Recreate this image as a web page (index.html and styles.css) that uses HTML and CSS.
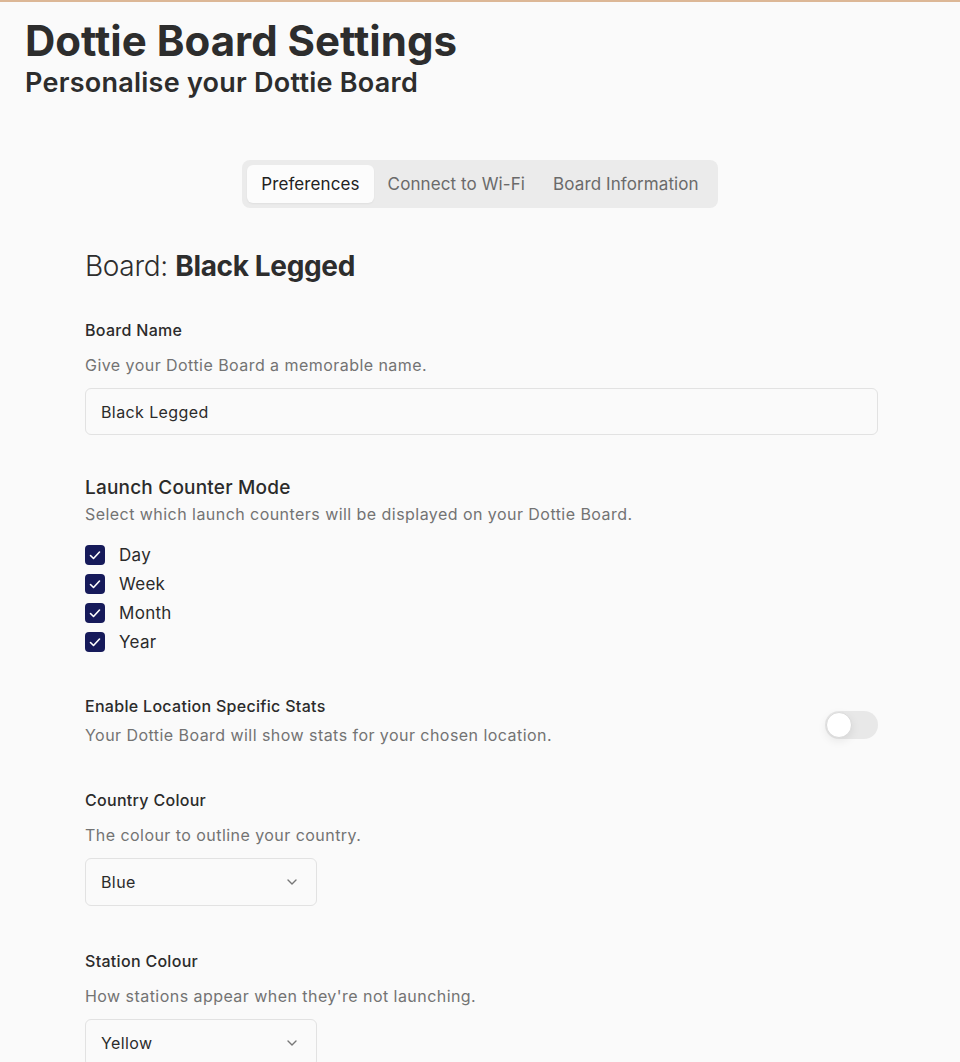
FILE: index.html
```html
<!DOCTYPE html>
<html>
<head>
<meta charset="utf-8">
<link rel="stylesheet" href="styles.css">
</head>
<body>
<div class="topline"></div>
<header class="header">
  <h1 class="title">Dottie Board Settings</h1>
  <h2 class="subtitle">Personalise your Dottie Board</h2>
</header>
<nav class="tabs-wrap">
  <div class="tabs">
    <div class="tab active">Preferences</div>
    <div class="tab">Connect to Wi-Fi</div>
    <div class="tab">Board Information</div>
  </div>
</nav>
<main class="content">
  <h3 class="board">Board: <b>Black Legged</b></h3>

  <section class="field">
    <div class="label">Board Name</div>
    <div class="desc spaced">Give your Dottie Board a memorable name.</div>
    <div class="input">Black Legged</div>
  </section>

  <section class="field counters">
    <div class="label big">Launch Counter Mode</div>
    <div class="desc">Select which launch counters will be displayed on your Dottie Board.</div>
    <div class="checks">
      <div class="check"><span class="box"><svg viewBox="0 0 20 20" width="20" height="20"><path d="M5.5 10.5l3 3 6-6.5" fill="none" stroke="#fff" stroke-width="1.6" stroke-linecap="round" stroke-linejoin="round"/></svg></span>Day</div>
      <div class="check"><span class="box"><svg viewBox="0 0 20 20" width="20" height="20"><path d="M5.5 10.5l3 3 6-6.5" fill="none" stroke="#fff" stroke-width="1.6" stroke-linecap="round" stroke-linejoin="round"/></svg></span>Week</div>
      <div class="check"><span class="box"><svg viewBox="0 0 20 20" width="20" height="20"><path d="M5.5 10.5l3 3 6-6.5" fill="none" stroke="#fff" stroke-width="1.6" stroke-linecap="round" stroke-linejoin="round"/></svg></span>Month</div>
      <div class="check"><span class="box"><svg viewBox="0 0 20 20" width="20" height="20"><path d="M5.5 10.5l3 3 6-6.5" fill="none" stroke="#fff" stroke-width="1.6" stroke-linecap="round" stroke-linejoin="round"/></svg></span>Year</div>
    </div>
  </section>

  <section class="field toggle-row">
    <div>
      <div class="label">Enable Location Specific Stats</div>
      <div class="desc">Your Dottie Board will show stats for your chosen location.</div>
    </div>
    <div class="toggle"><span class="knob"></span></div>
  </section>

  <section class="field country">
    <div class="label">Country Colour</div>
    <div class="desc spaced">The colour to outline your country.</div>
    <div class="select">Blue<svg viewBox="0 0 16 16" width="16" height="16"><path d="M4 6l4 4 4-4" fill="none" stroke="#777" stroke-width="1.4" stroke-linecap="round" stroke-linejoin="round"/></svg></div>
  </section>

  <section class="field">
    <div class="label">Station Colour</div>
    <div class="desc spaced">How stations appear when they're not launching.</div>
    <div class="select">Yellow<svg viewBox="0 0 16 16" width="16" height="16"><path d="M4 6l4 4 4-4" fill="none" stroke="#777" stroke-width="1.4" stroke-linecap="round" stroke-linejoin="round"/></svg></div>
  </section>
</main>
</body>
</html>
```
FILE: styles.css
```css
html, body {
  margin: 0;
  padding: 0;
  background: #fafafa;
  font-family: Inter, "Noto Sans", sans-serif;
  color: #2b2b2b;
}
body { overflow: hidden; height: 1062px; }
.topline {
  height: 2px;
  background: #dcb796;
}
.header {
  padding: 14px 25px 0;
}
.title {
  margin: 0;
  font-size: 42px;
  font-weight: 700;
  letter-spacing: 0;
  line-height: 50px;
  color: #2d2d2d;
}
.subtitle {
  margin: 0;
  font-size: 27px;
  font-weight: 600;
  letter-spacing: 0.25px;
  line-height: 34px;
  color: #2d2d2d;
}
.tabs-wrap {
  display: flex;
  justify-content: center;
  margin-top: 60px;
}
.tabs {
  display: flex;
  background: #ebebeb;
  border-radius: 8px;
  padding: 5px;
}
.tab {
  font-size: 17px;
  letter-spacing: 0.1px;
  color: #6a6a6a;
  padding: 0 14px;
  height: 38px;
  line-height: 38px;
  border-radius: 6px;
}
.tab.active {
  background: #fcfcfc;
  color: #222;
  box-shadow: 0 1px 2px rgba(0,0,0,0.05);
}
.content {
  margin: 40px 82px 0 85px;
}
.board {
  margin: 0 0 35px;
  font-size: 28px;
  font-weight: 300;
  line-height: 36px;
  letter-spacing: -0.35px;
  color: #2d2d2d;
}
.board b { font-weight: 700; }
.field { margin-bottom: 40px; }
.label {
  font-size: 16px;
  font-weight: 500;
  letter-spacing: 0.3px;
  line-height: 22px;
  color: #2b2b2b;
}
.label.big { font-size: 19px; line-height: 26px; letter-spacing: 0.2px; }
.desc {
  font-size: 16px;
  line-height: 22px;
  letter-spacing: 0.45px;
  color: #737373;
  margin-top: 6px;
}
.desc.spaced { margin-top: 13px; margin-bottom: 12px; }
.counters .desc { margin-top: 2px; }
.input {
  height: 47px;
  box-sizing: border-box;
  border: 1px solid #e2e2e2;
  border-radius: 6px;
  padding: 0 15px;
  display: flex;
  align-items: center;
  font-size: 16px;
  letter-spacing: 0.4px;
  color: #2b2b2b;
}
.counters { margin-bottom: 43px; }
.checks {
  display: flex;
  flex-direction: column;
  gap: 9px;
  margin-top: 20px;
}
.check {
  display: flex;
  align-items: center;
  gap: 14px;
  font-size: 17px;
  letter-spacing: 0.3px;
  line-height: 20px;
  color: #2b2b2b;
}
.box {
  width: 20px;
  height: 20px;
  background: #161a5a;
  border-radius: 4px;
  display: flex;
}
.toggle-row {
  display: flex;
  justify-content: space-between;
  align-items: flex-start;
  margin-bottom: 43px;
}
.toggle-row .desc { margin-top: 7px; }
.toggle {
  width: 53px;
  height: 28px;
  background: #e8e8e8;
  border-radius: 14px;
  position: relative;
  margin-top: 16px;
}
.knob {
  position: absolute;
  left: 1px;
  top: 1px;
  width: 24px;
  height: 24px;
  border-radius: 50%;
  background: #fff;
  border: 1px solid #dadada;
  box-shadow: 0 3px 10px rgba(0,0,0,0.08);
}
.country { margin-bottom: 44px; }
.select {
  width: 232px;
  height: 48px;
  box-sizing: border-box;
  border: 1px solid #e2e2e2;
  border-radius: 6px;
  padding: 0 16px 0 15px;
  display: flex;
  align-items: center;
  justify-content: space-between;
  font-size: 16px;
  letter-spacing: 0.4px;
  color: #2b2b2b;
}
```
